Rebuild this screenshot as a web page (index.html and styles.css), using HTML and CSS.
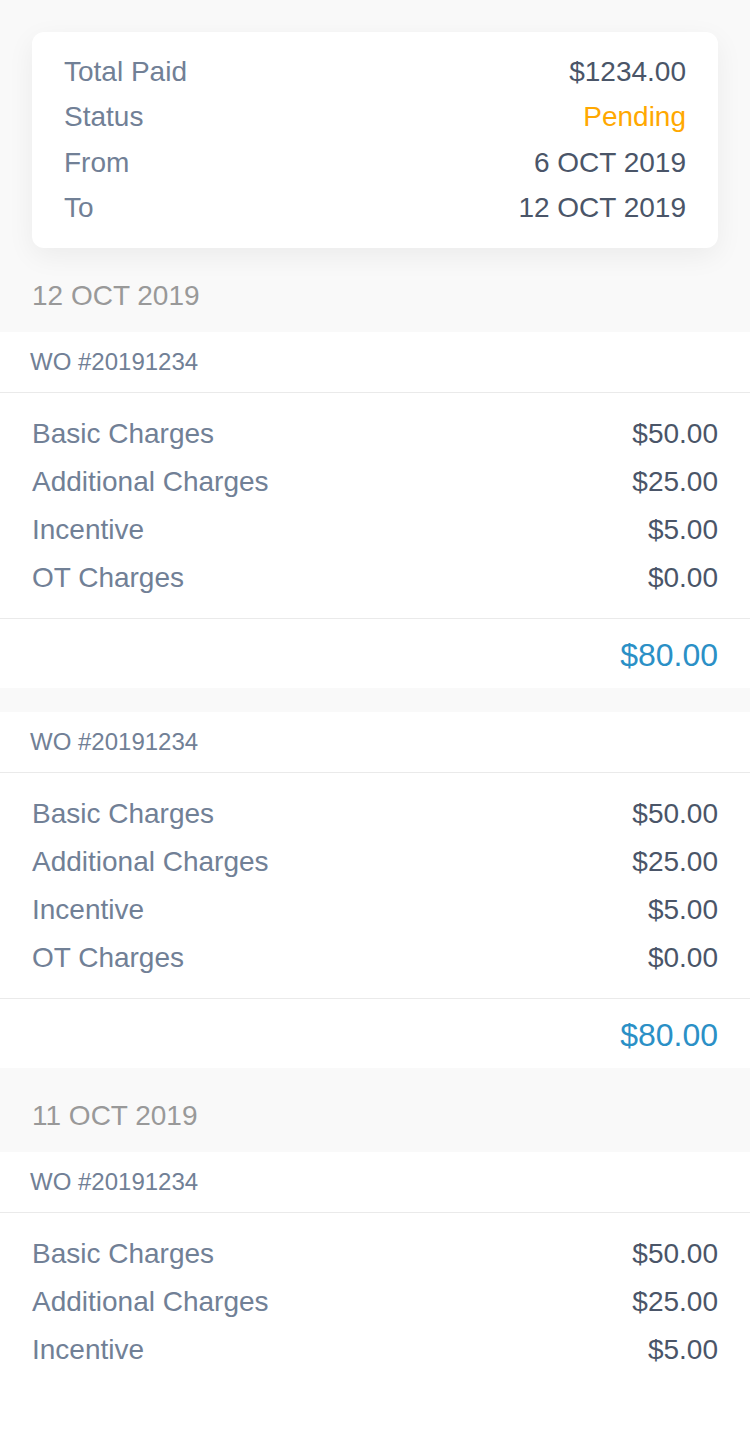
FILE: index.html
```html
<!DOCTYPE html>
<html lang="en">
<head>
<meta charset="utf-8">
<title>Payment Details</title>
<link rel="stylesheet" href="styles.css">
</head>
<body>
<main class="page">
  <section class="summary">
    <div class="summary-row"><span class="label">Total Paid</span><span class="value">$1234.00</span></div>
    <div class="summary-row"><span class="label">Status</span><span class="value pending">Pending</span></div>
    <div class="summary-row"><span class="label">From</span><span class="value">6 OCT 2019</span></div>
    <div class="summary-row"><span class="label">To</span><span class="value">12 OCT 2019</span></div>
  </section>

  <h2 class="date">12 OCT 2019</h2>
  <div class="group">
    <article class="order">
      <div class="order-head">WO #20191234</div>
      <div class="order-items">
        <div class="item"><span class="label">Basic Charges</span><span class="value">$50.00</span></div>
        <div class="item"><span class="label">Additional Charges</span><span class="value">$25.00</span></div>
        <div class="item"><span class="label">Incentive</span><span class="value">$5.00</span></div>
        <div class="item"><span class="label">OT Charges</span><span class="value">$0.00</span></div>
      </div>
      <div class="order-total">$80.00</div>
    </article>
    <article class="order">
      <div class="order-head">WO #20191234</div>
      <div class="order-items">
        <div class="item"><span class="label">Basic Charges</span><span class="value">$50.00</span></div>
        <div class="item"><span class="label">Additional Charges</span><span class="value">$25.00</span></div>
        <div class="item"><span class="label">Incentive</span><span class="value">$5.00</span></div>
        <div class="item"><span class="label">OT Charges</span><span class="value">$0.00</span></div>
      </div>
      <div class="order-total">$80.00</div>
    </article>
  </div>

  <h2 class="date">11 OCT 2019</h2>
  <div class="group last">
    <article class="order">
      <div class="order-head">WO #20191234</div>
      <div class="order-items">
        <div class="item"><span class="label">Basic Charges</span><span class="value">$50.00</span></div>
        <div class="item"><span class="label">Additional Charges</span><span class="value">$25.00</span></div>
        <div class="item"><span class="label">Incentive</span><span class="value">$5.00</span></div>
      </div>
    </article>
  </div>
</main>
</body>
</html>
```

FILE: styles.css
```css
html, body {
  margin: 0;
  padding: 0;
}
body {
  background: #f9f9f9;
  font-family: "Liberation Sans", Arial, sans-serif;
  width: 750px;
  height: 1448px;
  overflow: hidden;
}
.page {
  display: flex;
  flex-direction: column;
  padding-top: 32px;
  min-height: 1416px;
}
.summary {
  margin: 0 32px;
  background: #ffffff;
  border-radius: 12px;
  box-shadow: 0 8px 28px rgba(0, 0, 0, 0.06);
  padding: 17px 32px 17px;
}
.summary-row,
.item {
  display: flex;
  justify-content: space-between;
  align-items: center;
  font-size: 28px;
}
.summary-row {
  height: 45.5px;
}
.label {
  color: #718096;
}
.value {
  color: #4a5568;
}
.value.pending {
  color: #ffa800;
}
.date {
  margin: 0;
  padding: 28px 32px 16px;
  line-height: 40px;
  font-size: 28px;
  font-weight: normal;
  color: #999999;
}
.group {
  display: flex;
  flex-direction: column;
  gap: 24px;
}
.group.last {
  flex: 1;
  background: #ffffff;
}
.order {
  background: #ffffff;
}
.order-head {
  height: 60px;
  display: flex;
  align-items: center;
  padding: 0 30px;
  font-size: 24px;
  color: #718096;
  border-bottom: 1px solid #eaeaea;
}
.order-items {
  padding: 17px 32px 16px;
}
.item {
  height: 48px;
}
.order-total {
  border-top: 1px solid #eaeaea;
  height: 70px;
  box-sizing: border-box;
  padding: 13px 32px 0;
  text-align: right;
  font-size: 32px;
  line-height: 46px;
  color: #2b90c6;
}
```
